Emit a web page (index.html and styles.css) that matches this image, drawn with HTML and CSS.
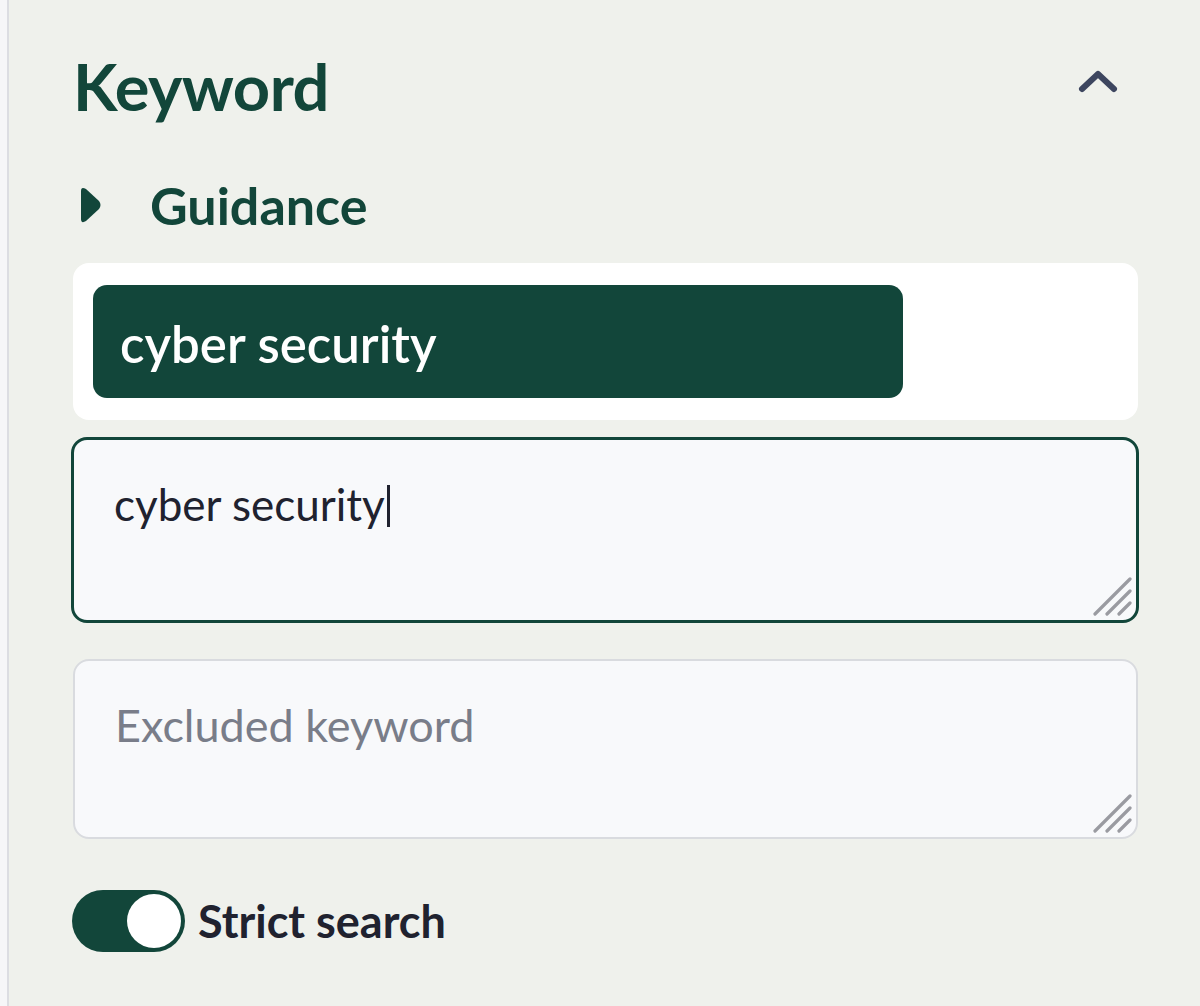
FILE: index.html
```html
<!DOCTYPE html>
<html lang="en">
<head>
<meta charset="utf-8">
<title>Keyword filter</title>
<link rel="stylesheet" href="styles.css">
</head>
<body>
<div class="page">
  <div class="edge"></div>
  <section class="panel">
    <header class="head">
      <h2 class="title">Keyword</h2>
      <svg class="chev" viewBox="0 0 44 28" width="44" height="28" aria-hidden="true">
        <path d="M6 22 L22 7 L38 22" fill="none" stroke="#3d465f" stroke-width="6" stroke-linecap="round" stroke-linejoin="round"/>
      </svg>
    </header>
    <div class="guide">
      <svg class="caret-ico" viewBox="0 0 26 40" width="26" height="40" aria-hidden="true">
        <path d="M4 6 Q4 1 9 4 L22 16 Q25 20 22 24 L9 36 Q4 39 4 34 Z" fill="#12463a"/>
      </svg>
      <span class="guide-text">Guidance</span>
    </div>
    <div class="chips">
      <span class="chip">cyber security</span>
    </div>
    <div class="field active">
      <span class="value">cyber security</span><span class="cursor"></span>
      <svg class="grip" viewBox="0 0 40 40" width="40" height="40" aria-hidden="true">
        <path d="M3 38 L38 3 M15 38 L38 15 M27 38 L38 27" stroke="#9a9ba1" stroke-width="3.2" stroke-linecap="round"/>
      </svg>
    </div>
    <div class="field">
      <span class="placeholder">Excluded keyword</span>
      <svg class="grip" viewBox="0 0 40 40" width="40" height="40" aria-hidden="true">
        <path d="M3 38 L38 3 M15 38 L38 15 M27 38 L38 27" stroke="#9a9ba1" stroke-width="3.2" stroke-linecap="round"/>
      </svg>
    </div>
    <label class="toggle-row">
      <span class="toggle"><span class="knob"></span></span>
      <span class="toggle-label">Strict search</span>
    </label>
  </section>
</div>
</body>
</html>
```
FILE: styles.css
```css
* { box-sizing: border-box; }
html, body { margin: 0; padding: 0; }
body {
  width: 1200px;
  height: 1006px;
  overflow: hidden;
  font-family: "Lato", "Noto Sans", sans-serif;
  background: #eff1ec;
}
.page {
  display: flex;
  height: 1006px;
}
.edge {
  width: 9px;
  flex: none;
  background: #f6f6f8;
  border-right: 2px solid #dcdde2;
}
.panel {
  flex: 1;
  background: #eff1ec;
  padding: 44px 62px 0 64px;
  display: flex;
  flex-direction: column;
}
.head {
  display: flex;
  align-items: center;
  justify-content: space-between;
  height: 84px;
}
.title {
  margin: 0;
  font-size: 65px;
  font-weight: 700;
  color: #12463a;
  letter-spacing: -0.5px;
  line-height: 1;
}
.chev {
  margin-right: 18px;
  margin-top: -10px;
}
.guide {
  display: flex;
  align-items: center;
  gap: 47px;
  margin-top: 52px;
  padding-left: 4px;
  height: 50px;
}
.guide-text {
  font-size: 52px;
  font-weight: 700;
  color: #12463a;
  line-height: 1;
}
.chips {
  margin-top: 33px;
  background: #ffffff;
  border-radius: 16px;
  height: 157px;
  padding: 22px 20px;
  display: flex;
  align-items: flex-start;
}
.chip {
  display: flex;
  align-items: center;
  width: 810px;
  height: 113px;
  padding-left: 27px;
  background: #12463a;
  border-radius: 14px;
  color: #ffffff;
  font-size: 51px;
  font-weight: 600;
  padding-top: 4px;
}
.field {
  position: relative;
  margin-top: 17px;
  height: 180px;
  background: #f8f9fb;
  border: 2px solid #d9dbdf;
  border-radius: 16px;
  padding: 36px 40px;
  font-size: 45px;
  line-height: 56px;
}
.field.active {
  height: 186px;
  border: 3px solid #12463a;
  margin-left: -2px;
  margin-right: -1px;
  padding-left: 40px;
  color: #20222f;
  font-size: 44px;
}
.field + .field { margin-top: 36px; }
.cursor {
  display: inline-block;
  width: 3px;
  height: 42px;
  background: #20222f;
  vertical-align: -6px;
  margin-left: 2px;
}
.placeholder { color: #797d89; }
.grip {
  position: absolute;
  right: 4px;
  bottom: 4px;
}
.toggle-row {
  display: flex;
  align-items: center;
  gap: 13px;
  margin-top: 51px;
  margin-left: -1px;
}
.toggle {
  width: 113px;
  height: 62px;
  border-radius: 31px;
  background: #12463a;
  padding: 4px;
  display: flex;
  justify-content: flex-end;
}
.knob {
  width: 54px;
  height: 54px;
  border-radius: 50%;
  background: #ffffff;
}
.toggle-label {
  font-size: 45px;
  font-weight: 700;
  color: #20222f;
}
```
